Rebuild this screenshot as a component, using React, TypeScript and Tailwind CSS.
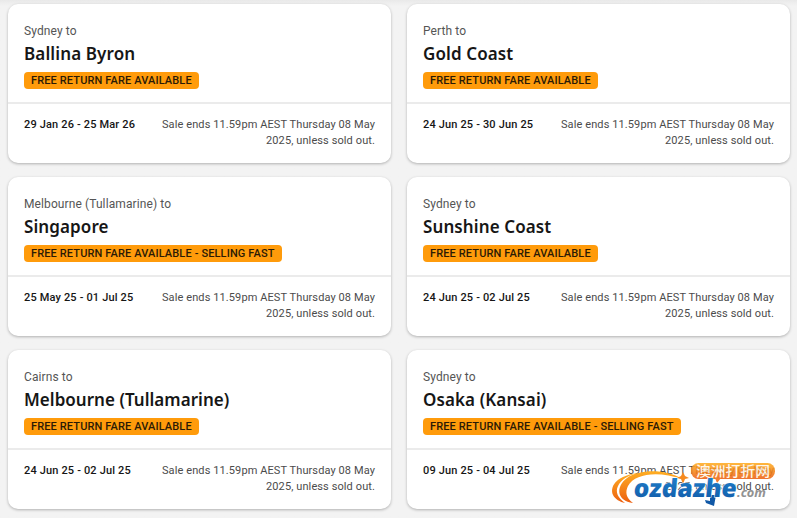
import React from 'react';

interface Fare {
  origin: string;
  destination: string;
  badge: string;
  dates: string;
  titleSpacing: string;
}

const fares: Fare[] = [
  { origin: 'Sydney', destination: 'Ballina Byron', badge: 'Free return fare available', dates: '29 Jan 26 - 25 Mar 26', titleSpacing: 'tracking-[0.12px]' },
  { origin: 'Perth', destination: 'Gold Coast', badge: 'Free return fare available', dates: '24 Jun 25 - 30 Jun 25', titleSpacing: 'tracking-[0.1px]' },
  { origin: 'Melbourne (Tullamarine)', destination: 'Singapore', badge: 'Free return fare available - selling fast', dates: '25 May 25 - 01 Jul 25', titleSpacing: 'tracking-[0.1px]' },
  { origin: 'Sydney', destination: 'Sunshine Coast', badge: 'Free return fare available', dates: '24 Jun 25 - 02 Jul 25', titleSpacing: 'tracking-[0.1px]' },
  { origin: 'Cairns', destination: 'Melbourne (Tullamarine)', badge: 'Free return fare available', dates: '24 Jun 25 - 02 Jul 25', titleSpacing: 'tracking-[0.03px]' },
  { origin: 'Sydney', destination: 'Osaka (Kansai)', badge: 'Free return fare available - selling fast', dates: '09 Jun 25 - 04 Jul 25', titleSpacing: 'tracking-[0.1px]' },
];

function FareCard({ fare }: { fare: Fare }) {
  return (
    <div className="h-[159px] rounded-[10px] bg-white shadow-[0_1px_3px_rgba(0,0,0,0.28)]">
      <div className="flex h-[100px] flex-col items-start border-b-2 border-[#ebebeb] px-4 pt-[18px]">
        <p className="text-[12px] leading-[18px] tracking-[0.1px] text-[#555]">{fare.origin} to</p>
        <h2 className={`font-['Noto_Sans',sans-serif] text-[17px] leading-[28px] font-semibold whitespace-nowrap text-[#161616] ${fare.titleSpacing}`}>
          {fare.destination}
        </h2>
        <span className="mt-1 h-[17px] rounded-[4px] bg-[#ff9b0b] px-[7px] text-[11px] leading-[17px] font-medium tracking-[0.13px] whitespace-nowrap text-[#2b1a05] uppercase">
          {fare.badge}
        </span>
      </div>
      <div className="flex justify-between px-4 pt-[13px] text-[11px] leading-4">
        <p className="font-medium tracking-[0.16px] whitespace-nowrap text-[#161616]">{fare.dates}</p>
        <p className="w-[220px] text-right tracking-[0.1px] text-[#4b4b4b]">
          Sale ends 11.59pm AEST Thursday 08 May
          <br />
          2025, unless sold out.
        </p>
      </div>
    </div>
  );
}

function Watermark() {
  return (
    <svg className="absolute top-[458px] left-[608px]" width="172" height="52" viewBox="0 0 172 52">
      <defs>
        <linearGradient id="swoosh" x1="0" y1="0" x2="0" y2="1">
          <stop offset="0" stopColor="#ffae22" />
          <stop offset="1" stopColor="#ec5f10" />
        </linearGradient>
        <linearGradient id="letters" x1="0" y1="0" x2="0" y2="1">
          <stop offset="0" stopColor="#2288d2" />
          <stop offset="1" stopColor="#1058a6" />
        </linearGradient>
      </defs>
      <path d="M30 15C11 17 1 27 5 37C7 41 12 44 17 45C10 40 7 34 10 28C13 22 20 17 30 15Z" fill="url(#swoosh)" />
      <path d="M74 21C58 11 32 11 19 20C7 29 9 43 25 45C18 40 17 34 20 28C27 15 51 13 74 21Z" fill="url(#swoosh)" />
      <path d="M75 14L77 18L81 20L77 21L75 26L73 21L69 20L73 18Z" fill="#f68b20" />
      <g opacity="0.87">
        <rect x="83" y="5" width="84" height="16" rx="7.5" fill="url(#swoosh)" />
        <path d="M107 20L109 25L113 20Z" fill="#ee6b15" />
        <text x="88" y="18" textLength="74" lengthAdjust="spacingAndGlyphs" fontFamily="'Noto Sans CJK SC', sans-serif" fontSize="14" fontWeight="500" fill="#fff6e8">澳洲打折网</text>
      </g>
      {/* tail under the h */}
      <path d="M102 37H108L106 48L98 45L97 42L102 43Z" fill="#1058a6" />
      <text x="0" y="0" transform="translate(25 39) skewX(-6)" textLength="103" lengthAdjust="spacingAndGlyphs" fontFamily="'Open Sans', sans-serif" fontWeight="800" fontSize="25" fill="url(#letters)" stroke="#fff" strokeWidth="1" paintOrder="stroke">ozdazhe</text>
      <text x="129" y="39" textLength="29" lengthAdjust="spacingAndGlyphs" fontFamily="'Open Sans', sans-serif" fontStyle="italic" fontWeight="700" fontSize="13" fill="#929292">.com</text>
    </svg>
  );
}

export default function App() {
  return (
    <div className="relative h-[518px] w-[797px] overflow-hidden bg-[#f3f3f3] bg-linear-to-b from-[#e9e9e9] to-[#f3f3f3] to-[6px] pt-1 pl-2 font-[Roboto,sans-serif]">
      <div className="grid w-[782px] grid-cols-2 gap-x-4 gap-y-[14px]">
        {fares.map((fare, index) => (
          <FareCard key={index} fare={fare} />
        ))}
      </div>
      <Watermark />
    </div>
  );
}
